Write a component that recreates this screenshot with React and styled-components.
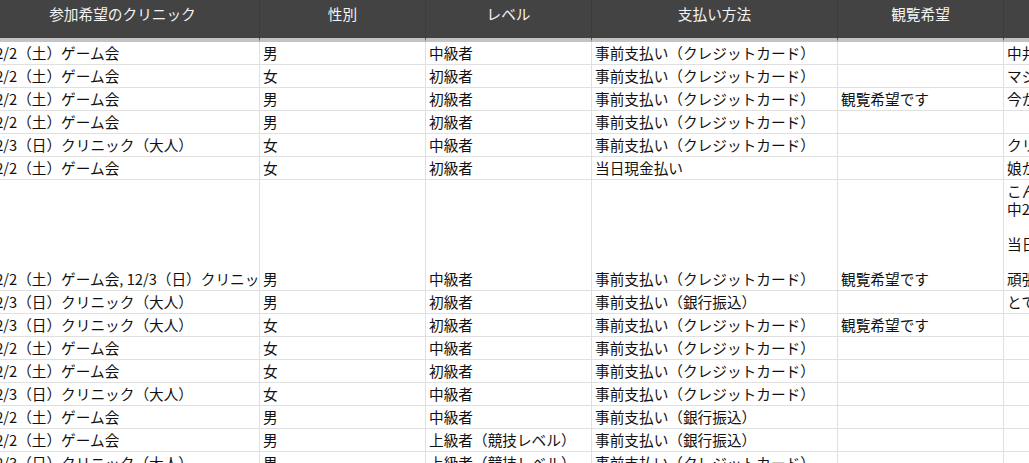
import React from "react";
import styled, { createGlobalStyle } from "styled-components";

const Global = createGlobalStyle`
  html, body { margin: 0; padding: 0; background: #fff; overflow: hidden; }
  #root { width: 1029px; height: 463px; overflow: hidden; }
`;

const Sheet = styled.table`
  border-collapse: separate;
  border-spacing: 0;
  table-layout: fixed;
  width: 1244px;
  margin-left: -14px;
  font-family: "Noto Sans CJK JP", "Liberation Sans", sans-serif;
  font-size: 14.67px;
  color: #111;
`;

const HeadCell = styled.th`
  box-sizing: content-box;
  height: 27px;
  padding: 0 0 11px;
  background: #434343;
  border-right: 1px solid #3c3c3c;
  border-bottom: 4px solid #c4c4c4;
  color: #f3f3f3;
  font-weight: 400;
  font-size: 14.67px;
  line-height: 20px;
  text-align: center;
  white-space: nowrap;
  overflow: hidden;
`;

const Cell = styled.td`
  padding: 2px 3px 2px ${(p) => (p.$first ? "1px" : "3px")};
  border-right: 1px solid #e0e0e0;
  border-bottom: 1px solid #e0e0e0;
  line-height: ${(p) => (p.$note ? "17.67px" : "18px")};
  height: 18px;
  vertical-align: bottom;
  white-space: ${(p) => (p.$note ? "pre" : "nowrap")};
  overflow: hidden;
`;

const columns = [274, 166, 166, 246, 166, 226];
const headers = ["参加希望のクリニック", "性別", "レベル", "支払い方法", "観覧希望", ""];

const G = "12/2（土）ゲーム会";
const C = "12/3（日）クリニック（大人）";
const CARD = "事前支払い（クレジットカード）";
const BANK = "事前支払い（銀行振込）";
const W = "観覧希望です";

const rows = [
  [G, "男", "中級者", CARD, "", "中井さん"],
  [G, "女", "初級者", CARD, "", "マジで"],
  [G, "男", "初級者", CARD, W, "今から"],
  [G, "男", "初級者", CARD, "", ""],
  [C, "女", "中級者", CARD, "", "クリニック"],
  [G, "女", "初級者", "当日現金払い", "", "娘が"],
  ["12/2（土）ゲーム会, 12/3（日）クリニック（大人）", "男", "中級者", CARD, W, "こんにちは\n中2です\n\n当日は\n\n頑張ります"],
  [C, "男", "初級者", BANK, "", "とても"],
  [C, "女", "初級者", CARD, W, ""],
  [G, "女", "中級者", CARD, "", ""],
  [G, "女", "初級者", CARD, "", ""],
  [C, "女", "中級者", CARD, "", ""],
  [G, "男", "中級者", BANK, "", ""],
  [G, "男", "上級者（競技レベル）", BANK, "", ""],
  [C, "男", "上級者（競技レベル）", CARD, "", ""],
];

export default function App() {
  return (
    <>
      <Global />
      <Sheet>
        <colgroup>
          {columns.map((w, i) => (
            <col key={i} width={w} />
          ))}
        </colgroup>
        <thead>
          <tr>
            {headers.map((h, i) => (
              <HeadCell key={i}>{h}</HeadCell>
            ))}
          </tr>
        </thead>
        <tbody>
          {rows.map((r, i) => (
            <tr key={i}>
              {r.map((c, j) => (
                <Cell key={j} $first={j === 0} $note={j === 5}>
                  {c}
                </Cell>
              ))}
            </tr>
          ))}
        </tbody>
      </Sheet>
    </>
  );
}
